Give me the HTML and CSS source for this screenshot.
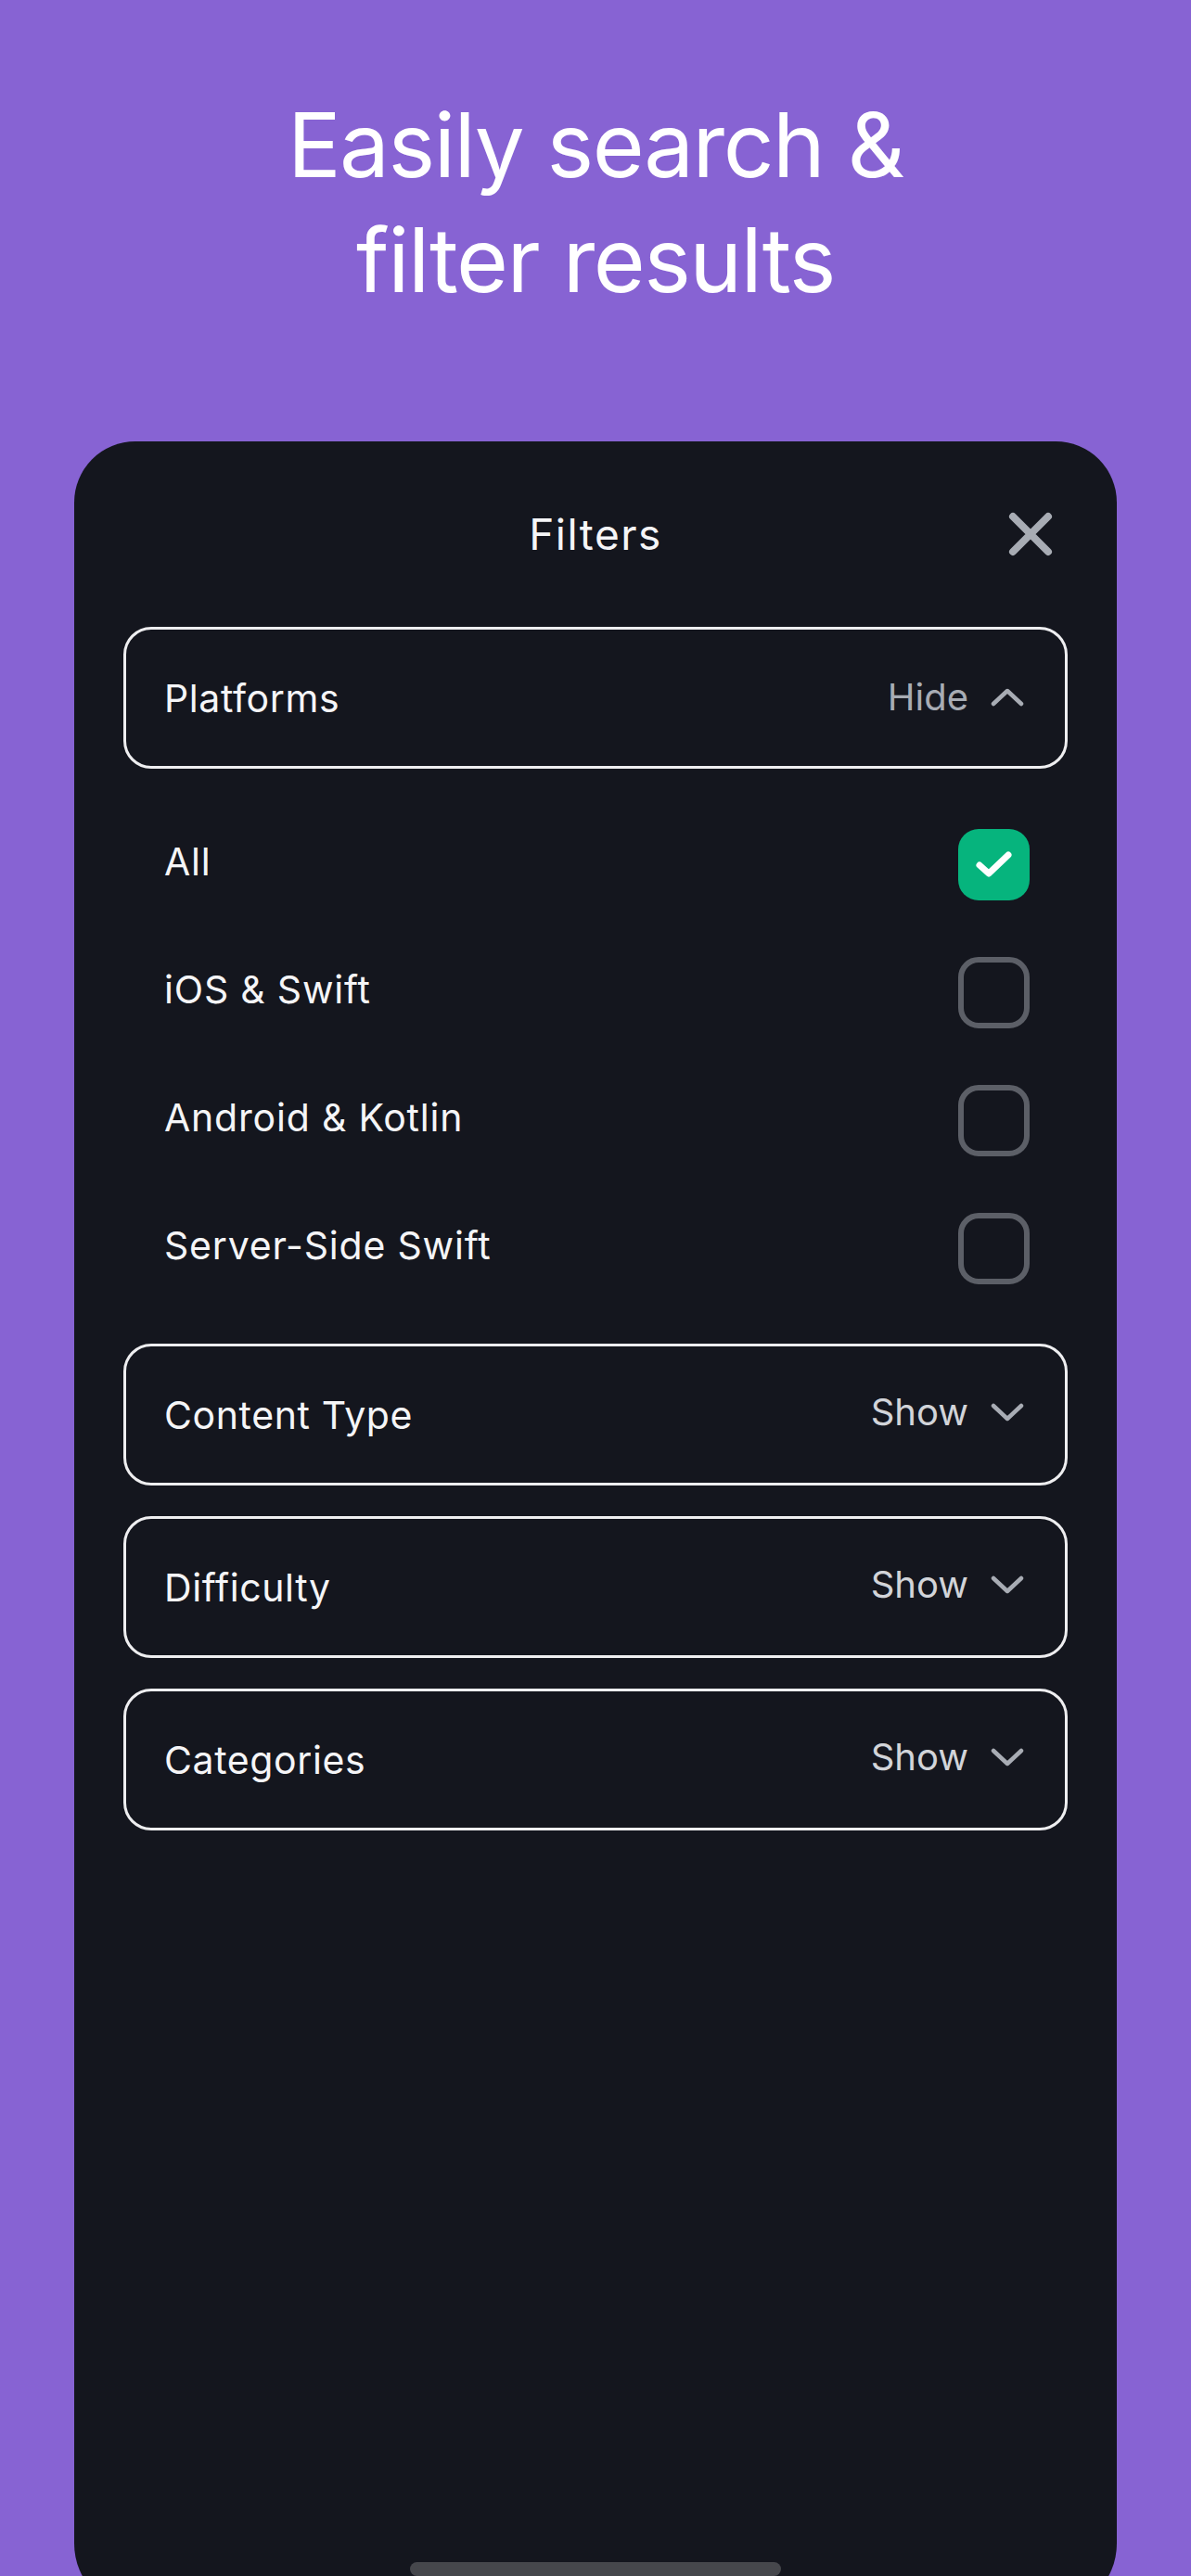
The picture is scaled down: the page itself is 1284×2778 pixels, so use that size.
FILE: index.html
```html
<!DOCTYPE html>
<html lang="en">
  <head>
    <meta charset="UTF-8" />
    <meta name="viewport" content="width=device-width, initial-scale=1.0" />
    <title>Filters</title>
    <link rel="stylesheet" href="styles.css">
  </head>
  <body>
    <h1 class="headline">Easily search &amp;<br />filter results</h1>

    <div class="sheet">
      <div class="sheet-header">
        <span></span>
        <h2>Filters</h2>
        <button class="close-btn" aria-label="Close">
          <svg width="48" height="48" viewBox="0 0 48 48">
            <path d="M5 5 L43 43 M43 5 L5 43" stroke="#a8acb4" stroke-width="8" stroke-linecap="round" fill="none" />
          </svg>
        </button>
      </div>

      <div class="section">
        <span class="section-title">Platforms</span>
        <span class="toggle toggle-hide">
          Hide
          <svg width="36" height="20" viewBox="0 0 36 20">
            <polyline points="3,17 18,3 33,17" stroke="#a8acb4" stroke-width="4.5" stroke-linecap="round" stroke-linejoin="round" fill="none" />
          </svg>
        </span>
      </div>

      <ul class="options">
        <li class="option">
          <span class="option-label">All</span>
          <span class="checkbox checked">
            <svg width="77" height="77" viewBox="0 0 77 77">
              <polyline points="23,39 33,48 54,28" stroke="#fff" stroke-width="7" stroke-linecap="round" stroke-linejoin="round" fill="none" />
            </svg>
          </span>
        </li>
        <li class="option">
          <span class="option-label">iOS &amp; Swift</span>
          <span class="checkbox"></span>
        </li>
        <li class="option">
          <span class="option-label">Android &amp; Kotlin</span>
          <span class="checkbox"></span>
        </li>
        <li class="option">
          <span class="option-label">Server-Side Swift</span>
          <span class="checkbox"></span>
        </li>
      </ul>

      <div class="section-list">
        <div class="section">
          <span class="section-title">Content Type</span>
          <span class="toggle">
            Show
            <svg width="36" height="20" viewBox="0 0 36 20">
              <polyline points="3,3 18,17 33,3" stroke="#a8acb4" stroke-width="4.5" stroke-linecap="round" stroke-linejoin="round" fill="none" />
            </svg>
          </span>
        </div>
        <div class="section">
          <span class="section-title">Difficulty</span>
          <span class="toggle">
            Show
            <svg width="36" height="20" viewBox="0 0 36 20">
              <polyline points="3,3 18,17 33,3" stroke="#a8acb4" stroke-width="4.5" stroke-linecap="round" stroke-linejoin="round" fill="none" />
            </svg>
          </span>
        </div>
        <div class="section">
          <span class="section-title">Categories</span>
          <span class="toggle">
            Show
            <svg width="36" height="20" viewBox="0 0 36 20">
              <polyline points="3,3 18,17 33,3" stroke="#a8acb4" stroke-width="4.5" stroke-linecap="round" stroke-linejoin="round" fill="none" />
            </svg>
          </span>
        </div>
      </div>

      <div class="home-indicator"></div>
    </div>
  </body>
</html>
```

FILE: styles.css
```css
* {
  margin: 0;
  padding: 0;
  box-sizing: border-box;
  font-family: "Inter", "Noto Sans", sans-serif;
}

body {
  background-color: #8763d3;
  height: 2778px;
  overflow: hidden;
  color: #f5f5f7;
}

.headline {
  padding-top: 94px;
  font-size: 96px;
  line-height: 124px;
  font-weight: 400;
  text-align: center;
  color: #fff;
  letter-spacing: -1.5px;
}

.sheet {
  display: flex;
  flex-direction: column;
  margin: 134px 80px 0;
  height: 2341px;
  padding: 0 53px;
  background-color: #14161e;
  border-radius: 66px 66px 74px 74px;
}

.sheet-header {
  display: grid;
  grid-template-columns: 1fr auto 1fr;
  align-items: center;
  height: 200px;
}

.sheet-header h2 {
  font-size: 46px;
  font-weight: 400;
  letter-spacing: 1.5px;
  color: #f5f5f7;
}

.close-btn {
  justify-self: end;
  margin-right: 16px;
  width: 48px;
  height: 48px;
  background: none;
  border: none;
  display: flex;
}

.section {
  display: flex;
  justify-content: space-between;
  align-items: center;
  height: 153px;
  padding: 0 44px 0 41px;
  border: 3px solid #eeeef0;
  border-radius: 30px;
}

.section-title {
  font-size: 41px;
  letter-spacing: 0.6px;
}

.toggle {
  display: flex;
  align-items: center;
  gap: 24px;
  font-size: 40px;
  color: #d2d4d9;
  margin-top: -6px;
}

.toggle-hide {
  color: #a8acb4;
  margin-top: -2px;
}

.options {
  list-style: none;
  padding: 34px 0;
}

.option {
  display: flex;
  justify-content: space-between;
  align-items: center;
  height: 138px;
  padding: 0 41px 0 44px;
  font-size: 41px;
}

.option-label {
  margin-top: -6px;
  letter-spacing: 0.8px;
}

.checkbox {
  width: 77px;
  height: 77px;
  border: 6px solid #5c5f67;
  border-radius: 22px;
}

.checkbox.checked {
  border: none;
  background-color: #06b47d;
}

.checkbox svg {
  display: block;
}

.section-list {
  display: flex;
  flex-direction: column;
  gap: 33px;
}

.home-indicator {
  align-self: center;
  margin-top: auto;
  margin-bottom: 39px;
  width: 400px;
  height: 15px;
  border-radius: 8px;
  background-color: #46474c;
}
```
